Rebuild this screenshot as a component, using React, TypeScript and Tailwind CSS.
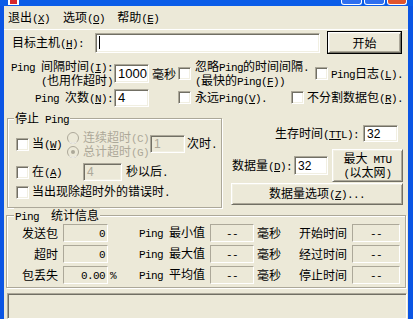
import React from "react";

function T({ s, dis }: { s: string; dis?: boolean }) {
  const out: React.ReactNode[] = [];
  let run = "";
  let runAscii: boolean | null = null;
  let k = 0;
  const flush = () => {
    if (!run) return;
    out.push(
      runAscii ? (
        <span key={k++} className="font-['Liberation_Mono',monospace] text-[11px] tracking-[-0.6px]">
          {run}
        </span>
      ) : (
        <span key={k++}>{run}</span>
      )
    );
    run = "";
  };
  for (let i = 0; i < s.length; i++) {
    const c = s[i];
    if (c === "_") {
      flush();
      const u = s[++i];
      out.push(
        <span key={k++} className="font-['Liberation_Mono',monospace] text-[11px] tracking-[-0.6px] underline underline-offset-[1px]">
          {u}
        </span>
      );
      runAscii = null;
      continue;
    }
    const a = c.charCodeAt(0) < 128;
    if (runAscii !== null && a !== runAscii) flush();
    runAscii = a;
    run += c;
  }
  flush();
  return <span className={`whitespace-pre ${dis ? "text-[#ACA899]" : ""}`}>{out}</span>;
}

function Check({ className = "" }: { className?: string }) {
  return (
    <span
      className={`inline-block shrink-0 w-[13px] h-[13px] bg-white border border-t-[#ACA899] border-l-[#ACA899] border-b-white border-r-white shadow-[inset_1px_1px_0_#716F64,inset_-1px_-1px_0_#F1EFE2] ${className}`}
    />
  );
}

function Radio({ checked }: { checked?: boolean }) {
  return (
    <svg width="12" height="12" viewBox="0 0 12 12" className="shrink-0">
      <circle cx="6" cy="6" r="5.5" fill="#ECE9D8" stroke="#ACA899" />
      <path d="M2.2 9.8 A5.3 5.3 0 0 0 9.8 9.8" fill="none" stroke="#FFFFFF" strokeWidth="1" opacity="0.9" />
      {checked && <circle cx="6" cy="6" r="2" fill="#ACA899" />}
    </svg>
  );
}

function Edit({
  className = "",
  children,
  disabled,
}: {
  className?: string;
  children?: React.ReactNode;
  disabled?: boolean;
}) {
  return (
    <div
      className={`flex items-center shrink-0 border border-t-[#ACA899] border-l-[#ACA899] border-b-white border-r-white shadow-[inset_1px_1px_0_#716F64,inset_-1px_-1px_0_#F1EFE2] font-['Liberation_Sans',sans-serif] text-[12px] pl-[3px] ${
        disabled ? "bg-[#ECE9D8] text-[#ACA899]" : "bg-white text-black"
      } ${className}`}
    >
      {children}
    </div>
  );
}

function Btn({ className = "", children }: { className?: string; children?: React.ReactNode }) {
  return (
    <div
      className={`flex flex-col items-center justify-center shrink-0 bg-[#ECE9D8] border border-t-white border-l-white border-b-[#716F64] border-r-[#716F64] shadow-[inset_1px_1px_0_#F1EFE2,inset_-1px_-1px_0_#ACA899] ${className}`}
    >
      {children}
    </div>
  );
}

function Stat({ className = "", children, right }: { className?: string; children?: React.ReactNode; right?: boolean }) {
  return (
    <div
      className={`h-[18px] flex items-center shrink-0 border border-t-[#ACA899] border-l-[#ACA899] border-b-white border-r-white ${
        right ? "justify-end pr-[2px]" : "justify-center"
      } ${className}`}
    >
      {children}
    </div>
  );
}

function StatRow({ a, v, pct, b, c }: { a: string; v: string; pct?: boolean; b: string; c: string }) {
  return (
    <div className="flex items-center h-[18px]">
      <div className="w-[56px] text-right pr-[5px]">
        <T s={a} />
      </div>
      <Stat className="w-[45px]" right>
        <T s={v} />
      </Stat>
      <div className="w-[31px] pl-[2px]">{pct && <T s="%" />}</div>
      <div className="w-[71px]">
        <T s={b} />
      </div>
      <Stat className="w-[44px]">
        <T s="--" />
      </Stat>
      <div className="w-[45px] pl-[3px]">
        <T s="毫秒" />
      </div>
      <div className="w-[53px]">
        <T s={c} />
      </div>
      <Stat className="w-[48px]">
        <T s="--" />
      </Stat>
    </div>
  );
}

export default function App() {
  return (
    <div className="w-[413px] h-[319px] overflow-hidden flex flex-col bg-[#ECE9D8] text-[12px] leading-[14px] text-black font-['Noto_Sans_CJK_SC',sans-serif]">
      {/* title bar (cropped) */}
      <div className="h-[6px] shrink-0 flex items-start bg-[#0A5DE8]">
        <div className="ml-[8px] w-[11px] h-[5px] bg-white flex justify-center">
          <div className="w-[7px] h-[4px] bg-[#D8262A]" />
        </div>
        <div className="flex-1" />
        <div className="w-[21px] h-[5px] border border-t-0 border-white rounded-b-[3px] bg-[#2F6FEF]" />
        <div className="ml-[2px] w-[21px] h-[5px] border border-t-0 border-white rounded-b-[3px] bg-[#2F6FEF]" />
        <div className="ml-[2px] w-[20px] h-[5px] border border-t-0 border-white rounded-b-[3px] bg-[#E1552E]" />
        <div className="w-[6px]" />
      </div>

      <div className="flex flex-1 min-h-0">
        <div className="w-[4px] shrink-0 bg-[#0B55E4]" />
        <div className="flex-1 min-w-0 flex flex-col">
          {/* menu */}
          <div className="h-[23px] shrink-0 flex items-center pl-[4px]">
            <T s="退出(_X)" />
            <span className="ml-[13px]">
              <T s="选项(_O)" />
            </span>
            <span className="ml-[12px]">
              <T s="帮助(_E)" />
            </span>
          </div>
          <div className="h-px shrink-0 bg-white" />

          {/* row 1 */}
          <div className="mt-[1px] h-[23px] shrink-0 flex items-center">
            <div className="w-[91px] pl-[8px]">
              <T s="目标主机(_H):" />
            </div>
            <Edit className="w-[225px] h-[20px]">
              <span className="w-px h-[13px] bg-black" />
            </Edit>
            <div className="ml-[7px] border border-black">
              <Btn className="w-[73px] h-[21px]">
                <T s="开始" />
              </Btn>
            </div>
          </div>

          {/* row 2 */}
          <div className="mt-[8px] h-[23px] shrink-0 flex items-center">
            <div className="w-[110px] text-right pr-[1px] leading-[12px]">
              <div>
                <T s="Ping 间隔时间(_I):" />
              </div>
              <div>
                <T s="(也用作超时)" />
              </div>
            </div>
            <Edit className="w-[35px] h-[19px] text-[13px]">1000</Edit>
            <span className="ml-[3px]">
              <T s="毫秒" />
            </span>
            <Check className="ml-[2px]" />
            <div className="ml-[4px] w-[114px] leading-[12px]">
              <div>
                <T s="忽略Ping的时间间隔." />
              </div>
              <div>
                <T s="(最快的Ping(_F))" />
              </div>
            </div>
            <Check className="ml-[6px]" />
            <span className="ml-[3px]">
              <T s="Ping日志(_L)." />
            </span>
          </div>

          {/* row 3 */}
          <div className="mt-[1px] h-[23px] shrink-0 flex items-center">
            <div className="w-[110px] text-right pr-[1px]">
              <T s="Ping 次数(_N):" />
            </div>
            <Edit className="w-[35px] h-[18px] text-[13px]">4</Edit>
            <Check className="ml-[29px]" />
            <span className="ml-[4px]">
              <T s="永远Ping(_V)." />
            </span>
            <Check className="ml-[24px]" />
            <span className="ml-[3px]">
              <T s="不分割数据包(_R)." />
            </span>
          </div>

          {/* middle section */}
          <div className="mt-[9px] shrink-0 flex">
            <div className="ml-[3px] w-[215px] h-[90px] relative border border-[#ACA899] shadow-[inset_1px_1px_0_#fff,1px_1px_0_#fff] pt-[11px] pl-[8px]">
              <div className="absolute left-[6px] -top-[8px] bg-[#ECE9D8] px-[1px]">
                <T s="停止 Ping" />
              </div>
              <div className="h-[28px] flex items-center">
                <Check />
                <span className="ml-[3px]">
                  <T s="当(_W)" />
                </span>
                <div className="ml-[5px] w-[82px] flex flex-col pt-[1px]">
                  <div className="h-[14px] flex items-center">
                    <Radio />
                    <span className="ml-[4px]">
                      <T s="连续超时(C)" dis />
                    </span>
                  </div>
                  <div className="h-[14px] flex items-center">
                    <Radio checked />
                    <span className="ml-[4px]">
                      <T s="总计超时(G)" dis />
                    </span>
                  </div>
                </div>
                <Edit disabled className="ml-[1px] w-[35px] h-[18px]">
                  1
                </Edit>
                <span className="ml-[2px]">
                  <T s="次时." />
                </span>
              </div>
              <div className="mt-[4px] h-[20px] flex items-center">
                <Check />
                <span className="ml-[3px]">
                  <T s="在(_A)" />
                </span>
                <Edit disabled className="ml-[21px] w-[39px] h-[18px]">
                  4
                </Edit>
                <span className="ml-[4px]">
                  <T s="秒以后." />
                </span>
              </div>
              <div className="mt-[2px] h-[16px] flex items-center">
                <Check />
                <span className="ml-[3px]">
                  <T s="当出现除超时外的错误时." />
                </span>
              </div>
            </div>

            <div className="flex-1 flex flex-col pl-[10px]">
              <div className="mt-[7px] h-[17px] flex items-center justify-end pr-[10px]">
                <T s="生存时间(_T_TL):" />
                <Edit className="ml-[4px] w-[35px] h-[17px]">32</Edit>
              </div>
              <div className="mt-[7px] h-[33px] flex items-center">
                <T s="数据量(_D):" />
                <Edit className="ml-[2px] w-[34px] h-[19px]">32</Edit>
                <Btn className="ml-[4px] w-[71px] h-[33px] leading-[12px]">
                  <div>
                    <T s="最大 MTU" />
                  </div>
                  <div>
                    <T s="(以太网)" />
                  </div>
                </Btn>
              </div>
              <Btn className="mt-[1px] -ml-[1px] w-[172px] h-[22px]">
                <div>
                  <T s="数据量选项(_Z)..." />
                </div>
              </Btn>
            </div>
          </div>

          {/* statistics */}
          <div className="mt-[7px] ml-[2px] w-[400px] h-[73px] shrink-0 relative border border-[#ACA899] shadow-[inset_1px_1px_0_#fff,1px_1px_0_#fff] pt-[8px] flex flex-col gap-[3px]">
            <div className="absolute left-[7px] -top-[8px] bg-[#ECE9D8] px-[1px]">
              <T s="Ping  统计信息" />
            </div>
            <StatRow a="发送包" v="0" b="Ping 最小值" c="开始时间" />
            <StatRow a="超时" v="0" b="Ping 最大值" c="经过时间" />
            <StatRow a="包丢失" v="0.00" pct b="Ping 平均值" c="停止时间" />
          </div>

          {/* status bar */}
          <div className="mt-[5px] ml-[3px] w-[400px] flex-1 border border-t-[#ACA899] border-l-[#ACA899] border-b-white border-r-white shadow-[inset_1px_1px_0_#716F64]" />
        </div>
        <div className="w-[5px] shrink-0 bg-[#0B55E4]" />
      </div>
    </div>
  );
}
